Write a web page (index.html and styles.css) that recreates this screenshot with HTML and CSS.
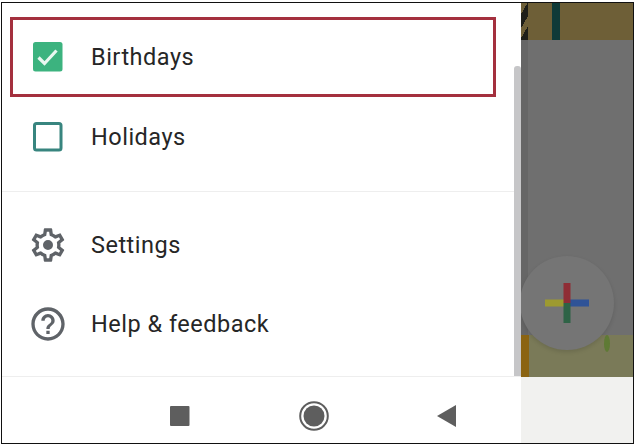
FILE: index.html
```html
<!doctype html>
<html lang="en">
  <head>
    <meta charset="utf-8" />
    <title>Calendar drawer</title>
    <link rel="stylesheet" href="styles.css">
  </head>
  <body>
    <div class="frame">
      <div class="main">
        <!-- Drawer -->
        <div class="drawer">
          <div class="scrollbar"></div>
          <div class="section calendars">
            <div class="row selected">
              <svg class="icon" width="32" height="32" viewBox="0 0 32 32">
                <rect x="1" y="1" width="29.5" height="29.5" rx="2.5" fill="#3cb37f" />
                <path d="M6.5 16.5l6 6L24.5 9.5" fill="none" stroke="#e9f7f0" stroke-width="3.2" />
              </svg>
              <span>Birthdays</span>
            </div>
            <div class="row">
              <svg class="icon" width="32" height="32" viewBox="0 0 32 32">
                <rect x="2.5" y="2.5" width="26.5" height="26.5" rx="2" fill="none" stroke="#38857f" stroke-width="3" />
              </svg>
              <span>Holidays</span>
            </div>
          </div>
          <div class="section links">
            <div class="row">
              <svg class="icon" width="40" height="40" viewBox="0 0 24 24">
                <path d="M19.43 12.98c.04-.32.07-.64.07-.98s-.03-.66-.07-.98l2.11-1.65c.19-.15.24-.42.12-.64l-2-3.46c-.12-.22-.39-.3-.61-.22l-2.49 1c-.52-.4-1.08-.73-1.69-.98l-.38-2.65C14.46 2.18 14.25 2 14 2h-4c-.25 0-.46.18-.49.42l-.38 2.65c-.61.25-1.17.59-1.69.98l-2.49-1c-.23-.09-.49 0-.61.22l-2 3.46c-.13.22-.07.49.12.64l2.11 1.65c-.04.32-.07.65-.07.98s.03.66.07.98l-2.11 1.65c-.19.15-.24.42-.12.64l2 3.46c.12.22.39.3.61.22l2.49-1c.52.4 1.08.73 1.69.98l.38 2.65c.03.24.24.42.49.42h4c.25 0 .46-.18.49-.42l.38-2.65c.61-.25 1.17-.59 1.69-.98l2.49 1c.23.09.49 0 .61-.22l2-3.46c.12-.22.07-.49-.12-.64l-2.11-1.65zM17.45 11.27c.04.31.05.52.05.73s-.02.43-.05.73l-.14 1.13.89.7 1.08.84-.7 1.21-1.27-.51-1.04-.42-.9.68c-.43.32-.84.56-1.25.73l-1.06.43-.16 1.13-.2 1.35h-1.4l-.19-1.35-.16-1.13-1.06-.43c-.43-.18-.83-.41-1.23-.71l-.91-.7-1.06.43-1.27.51-.7-1.21 1.08-.84.89-.7-.14-1.13c-.03-.31-.05-.54-.05-.74s.02-.43.05-.73l.14-1.13-.89-.7-1.08-.84.7-1.21 1.27.51 1.04.42.9-.68c.43-.32.84-.56 1.25-.73l1.06-.43.16-1.13.2-1.35h1.39l.19 1.35.16 1.13 1.06.43c.43.18.83.41 1.23.71l.91.7 1.06-.43 1.27-.51.7 1.21-1.07.85-.89.7.14 1.13zM12 9a3 3 0 1 0 0 6 3 3 0 0 0 0-6z" fill="#5f6368" />
              </svg>
              <span>Settings</span>
            </div>
            <div class="row">
              <svg class="icon" width="40" height="40" viewBox="0 0 24 24">
                <path d="M11 18h2v-2h-2v2zm1-16C6.48 2 2 6.48 2 12s4.48 10 10 10 10-4.48 10-10S17.52 2 12 2zm0 18c-4.41 0-8-3.59-8-8s3.59-8 8-8 8 3.59 8 8-3.59 8-8 8zm0-14c-2.21 0-4 1.79-4 4h2c0-1.1.9-2 2-2s2 .9 2 2c0 2-3 1.75-3 5h2c0-2.25 3-2.5 3-5 0-2.21-1.79-4-4-4z" fill="#5f6368" />
              </svg>
              <span>Help &amp; feedback</span>
            </div>
          </div>
        </div>
        <!-- Dimmed calendar behind the drawer -->
        <div class="behind">
          <div class="band top">
            <div class="hatch"></div>
            <div class="stripe"></div>
          </div>
          <div class="band dim"></div>
          <div class="band olive"><div class="tick"></div></div>
          <div class="fab">
            <svg width="44" height="40" viewBox="0 0 44 40">
              <rect x="0" y="16.5" width="22" height="7" fill="#9d9a30" />
              <rect x="22" y="16.5" width="22" height="7" fill="#2f5397" />
              <rect x="18.5" y="0" width="7" height="20" fill="#8f2d35" />
              <rect x="18.5" y="20" width="7" height="20" fill="#2e6346" />
            </svg>
          </div>
        </div>
      </div>
      <!-- Android nav bar -->
      <div class="navBar">
        <div class="navButtons">
          <svg width="22" height="22" viewBox="0 0 22 22"><rect x="1" y="1" width="19.5" height="20" rx="1" fill="#5e5e5e" /></svg>
          <svg width="32" height="32" viewBox="0 0 32 32">
            <circle cx="16" cy="16" r="13.8" fill="none" stroke="#5e5e5e" stroke-width="2" />
            <circle cx="16" cy="16" r="10.5" fill="#5e5e5e" />
          </svg>
          <svg width="19" height="22" viewBox="0 0 19 22"><path d="M19 0v22L0 11z" fill="#5e5e5e" /></svg>
        </div>
        <div class="navSide"></div>
      </div>
    </div>
  </body>
</html>
```

FILE: styles.css
```css
* {
  box-sizing: border-box;
}
body {
  margin: 0;
  background: #fff;
  font-family: Roboto, "Liberation Sans", sans-serif;
  color: #262626;
}
.frame {
  width: 633px;
  height: 442px;
  margin: 2px 0 0 1px;
  border: 1px solid #111;
  display: flex;
  flex-direction: column;
}
.main {
  flex: 1;
  display: flex;
  min-height: 0;
}
/* Drawer */
.drawer {
  position: relative;
  width: 519px;
  background: #fff;
  border-bottom: 1px solid #eee;
}
.scrollbar {
  position: absolute;
  top: 63px;
  right: 0;
  bottom: 0;
  width: 7px;
  background: #c6c6c8;
  border-radius: 3px 3px 0 0;
}
.section {
  display: flex;
  flex-direction: column;
}
.calendars {
  height: 189px;
  padding: 14px 25px 0 8px;
  border-bottom: 1px solid #eee;
}
.links {
  padding: 13px 0 0 8px;
}
.row {
  display: flex;
  align-items: center;
  height: 79px;
  padding-left: 19px;
  font-size: 23.5px;
  letter-spacing: 0.5px;
  border: 3px solid transparent;
}
.row span {
  margin-left: 27px;
}
.row.selected {
  height: 80px;
  border-color: #a4303e;
}
.links .row {
  padding-left: 15px;
}
.links .row span {
  margin-left: 23px;
}
/* Behind the drawer */
.behind {
  position: relative;
  flex: 1;
  display: flex;
  flex-direction: column;
  overflow: hidden;
}
.band.top {
  display: flex;
  height: 37px;
  background: #6e5f37;
}
.hatch {
  width: 7px;
  margin-right: 24px;
  background: repeating-linear-gradient(-60deg, #1e1e18 0 7px, #6e5f37 7px 12px);
}
.stripe {
  width: 8px;
  background: #0f3a38;
}
.band.dim {
  flex: 1;
  background: linear-gradient(#666, #666) left / 7px 100% no-repeat #6f6f6f;
}
.band.olive {
  position: relative;
  height: 42px;
  background: #7a7a58;
  border-left: 8px solid #8b6412;
}
.tick {
  position: absolute;
  top: 0;
  left: 75px;
  width: 6px;
  height: 17px;
  border-radius: 50%;
  background: #5f7a35;
}
.fab {
  position: absolute;
  top: 253px;
  left: -1px;
  width: 94px;
  height: 94px;
  border-radius: 50%;
  background: #757575;
  box-shadow: 0 2px 4px rgba(0, 0, 0, 0.12);
  display: flex;
  align-items: center;
  justify-content: center;
}
.fab svg {
  filter: blur(0.5px);
}
/* Android nav bar */
.navBar {
  height: 66px;
  display: flex;
}
.navButtons {
  width: 519px;
  display: flex;
  align-items: center;
  gap: 107px;
  padding: 12px 0 0 167px;
  background: #fff;
}
.navSide {
  flex: 1;
  background: #f1f1ef;
}
```
